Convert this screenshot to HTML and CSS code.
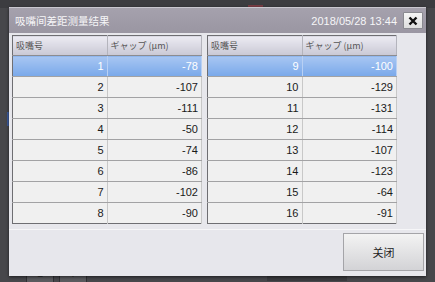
FILE: index.html
```html
<!DOCTYPE html>
<html lang="zh-CN">

<head>
    <meta charset="UTF-8">
    <meta name="viewport" content="width=device-width, initial-scale=1.0">
    <title>吸嘴间差距测量结果</title>
    <link rel="stylesheet" href="styles.css">
</head>

<body>
    <div class="screen">
        <div class="topbar">
            <span class="top-mark"></span>
        </div>
        <div class="middle">
            <span class="side-mark"></span>
        </div>
        <div class="bottombar">
            <span class="tool-btn">&#9632;</span>
            <span class="tool-btn">&#9660;</span>
            <span class="tool-wide"></span>
        </div>
    </div>

    <div class="dialog">
        <div class="titlebar">
            <span class="title">吸嘴间差距测量结果</span>
            <span class="datetime">2018/05/28 13:44</span>
            <button class="close-x" type="button">
                <svg width="10" height="10" viewBox="0 0 10 10">
                    <path d="M1.5 1.5 L8.5 8.5 M8.5 1.5 L1.5 8.5" stroke="#111" stroke-width="2.4" />
                </svg>
            </button>
        </div>
        <div class="dialog-body">
            <div class="tables">
                <table class="grid">
                    <thead>
                        <tr><th>吸嘴号</th><th>ギャップ (μm)</th></tr>
                    </thead>
                    <tbody>
                        <tr class="selected"><td>1</td><td>-78</td></tr>
                        <tr><td>2</td><td>-107</td></tr>
                        <tr><td>3</td><td>-111</td></tr>
                        <tr><td>4</td><td>-50</td></tr>
                        <tr><td>5</td><td>-74</td></tr>
                        <tr><td>6</td><td>-86</td></tr>
                        <tr><td>7</td><td>-102</td></tr>
                        <tr><td>8</td><td>-90</td></tr>
                    </tbody>
                </table>
                <table class="grid">
                    <thead>
                        <tr><th>吸嘴号</th><th>ギャップ (μm)</th></tr>
                    </thead>
                    <tbody>
                        <tr class="selected"><td>9</td><td>-100</td></tr>
                        <tr><td>10</td><td>-129</td></tr>
                        <tr><td>11</td><td>-131</td></tr>
                        <tr><td>12</td><td>-114</td></tr>
                        <tr><td>13</td><td>-107</td></tr>
                        <tr><td>14</td><td>-123</td></tr>
                        <tr><td>15</td><td>-64</td></tr>
                        <tr><td>16</td><td>-91</td></tr>
                    </tbody>
                </table>
            </div>
            <div class="footer">
                <button class="close-btn" type="button">关闭</button>
            </div>
        </div>
    </div>
</body>

</html>
```

FILE: styles.css
```css
body {
    margin: 0;
    width: 435px;
    height: 282px;
    overflow: hidden;
    background-color: #47474b;
    font-family: "Liberation Sans", "Noto Sans CJK SC", sans-serif;
}

.screen {
    display: flex;
    flex-direction: column;
    height: 282px;
}

.topbar {
    height: 8px;
    background: #3c3c40;
    display: flex;
}

.top-mark {
    margin-left: 248px;
    margin-top: 5px;
    width: 15px;
    height: 3px;
    background: #7a3c44;
}

.middle {
    flex: 1;
    display: flex;
    align-items: flex-start;
}

.side-mark {
    margin: 104px 0 0 7px;
    width: 2px;
    height: 14px;
    background: #3c5a9a;
}

.bottombar {
    height: 16px;
    display: flex;
    align-items: flex-start;
    gap: 5px;
    padding-left: 26px;
}

.tool-btn {
    width: 26px;
    height: 16px;
    background: #5a5a5e;
    border: 1px solid #303034;
    color: #1c1c1c;
    font-size: 10px;
    text-align: center;
    line-height: 14px;
}

.tool-wide {
    margin-left: 175px;
    width: 80px;
    height: 14px;
    background: #3a3a3e;
    border-top: 1px solid #2a2a2e;
}

.dialog {
    position: absolute;
    left: 9px;
    top: 7px;
    width: 417px;
    height: 268px;
    background: #e7e7ec;
    border-top: 1px solid #c9c7cf;
    box-shadow: 0 1px 3px rgba(0, 0, 0, 0.6);
    display: flex;
    flex-direction: column;
}

.titlebar {
    height: 25px;
    background: linear-gradient(#a5a1ad, #9a96a2);
    display: flex;
    align-items: center;
    padding: 0 3px 0 6px;
    color: #f6f6f8;
}

.title {
    flex: 1;
    font-family: "Noto Sans CJK SC", sans-serif;
    font-size: 10.5px;
}

.datetime {
    font-size: 11px;
    margin-right: 6px;
}

.close-x {
    width: 20px;
    height: 17px;
    padding: 0;
    border: 1px solid #8a8a90;
    border-radius: 1px;
    background: linear-gradient(#f6f6f6, #dedede);
    display: flex;
    align-items: center;
    justify-content: center;
}

.dialog-body {
    flex: 1;
    display: flex;
    flex-direction: column;
}

.tables {
    display: flex;
    gap: 5px;
    padding: 2px 0 0 3px;
}

.grid {
    width: 190px;
    border-collapse: collapse;
    border: 1px solid #6e6e72;
    background: #f0f0f0;
    font-family: "Liberation Sans Narrow", "Liberation Sans", sans-serif;
    font-size: 11px;
    color: #1a1a1a;
    table-layout: fixed;
}

.grid th {
    height: 19px;
    padding: 0 3px;
    text-align: left;
    font-family: "Noto Sans CJK SC", sans-serif;
    font-weight: normal;
    color: #555;
    font-size: 9px;
    background: linear-gradient(#ecebf3, #c9c8d4);
    border-bottom: 1px solid #8c8c90;
    border-right: 1px solid #b4b4bc;
}

.grid td {
    height: 20px;
    padding: 0 3px;
    text-align: right;
    border-bottom: 1px solid #a2a2a4;
    border-right: 1px solid #c8c8c8;
}

.grid tr:last-child td {
    border-bottom: none;
}

.grid .selected td {
    color: #fff;
    background: linear-gradient(#a8c6f2, #79a8ea);
    border-right-color: #b8d0f4;
}

.footer {
    margin-top: 5px;
    flex: 1;
    border-top: 1px solid #f6f6f8;
    display: flex;
    justify-content: flex-end;
    align-items: flex-start;
    padding: 3px 2px 0 0;
}

.close-btn {
    width: 81px;
    height: 38px;
    border: 1px solid #a4a4a8;
    background: linear-gradient(#f3f3f3, #d3d3d6);
    font-family: "Noto Sans CJK SC", sans-serif;
    font-size: 11px;
    color: #222;
}
```
